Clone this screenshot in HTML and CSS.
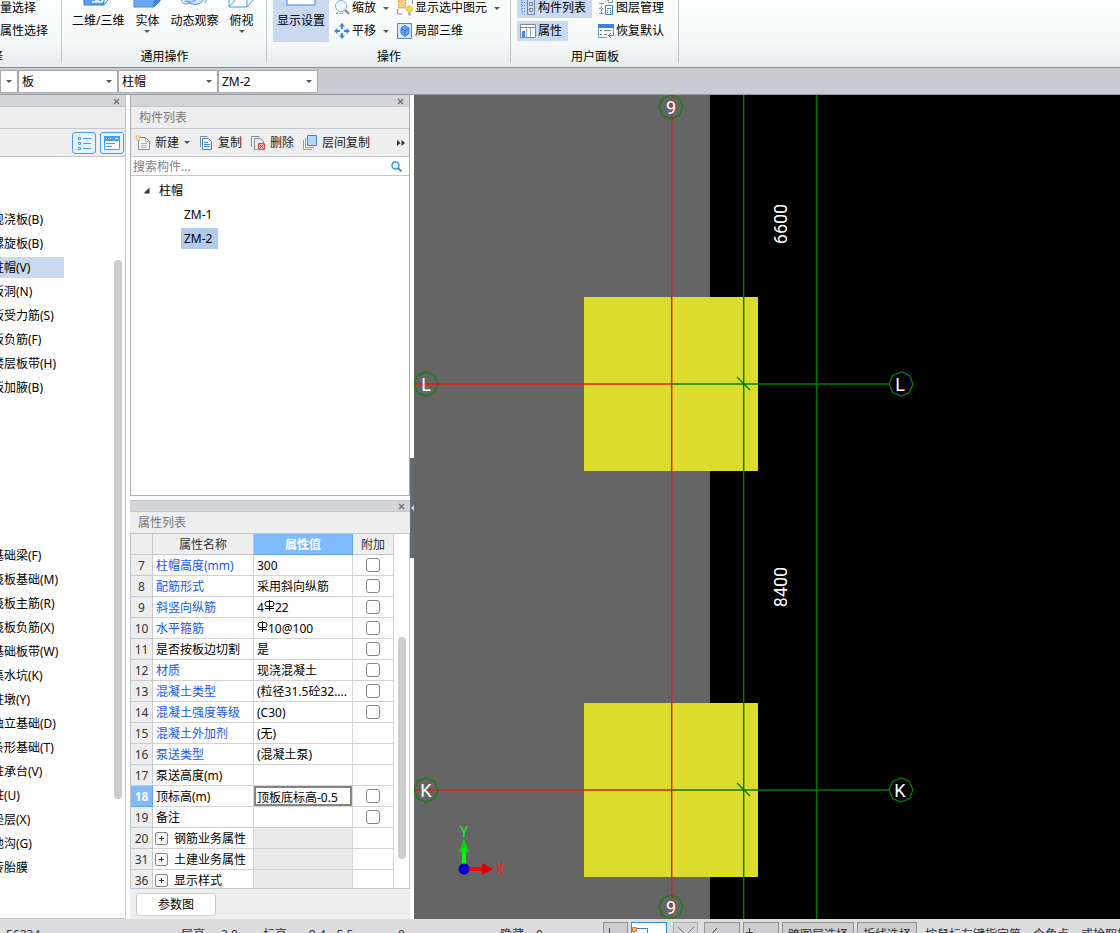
FILE: index.html
```html
<!DOCTYPE html>
<html lang="zh-CN">
<head>
<meta charset="utf-8">
<title>构件建模</title>
<link rel="stylesheet" href="styles.css">
</head>
<body>
<div class="app">
  <header class="ribbon">
    <section class="group group-select">
      <div class="group-body">
        <div class="stack">
          <button class="small-btn">批量选择</button>
          <button class="small-btn">按属性选择</button>
        </div>
      </div>
      <div class="group-label">选择</div>
    </section>
    <section class="group group-view">
      <div class="group-body">
        <button class="big-btn">
          <svg class="big-icon" viewBox="0 0 32 32"><path d="M2 8h20v18H2z" fill="#5b9df0" stroke="#2f7bd8"/><path d="M22 26l6-8V4" fill="none" stroke="#4a92ea"/><path d="M22 26l6-8-6 1z" fill="#e9f2fd" stroke="#4a92ea"/><path d="M10 19h4v4h-4m4 0M16 18v5h2q3 0 3-3v-2" fill="none" stroke="#fff" stroke-width="1.5"/></svg>
          <span>二维/三维</span><i class="spacer"></i>
        </button>
        <button class="big-btn">
          <svg class="big-icon" viewBox="0 0 32 32"><path d="M3 8h20v20H3z" fill="#6da9f2" stroke="#3f87df"/><path d="M23 28l6-6V4l-6 5z" fill="#4385de" stroke="#3f87df"/></svg>
          <span>实体</span><i class="caret"></i>
        </button>
        <button class="big-btn">
          <svg class="big-icon" viewBox="0 0 32 32"><path d="M5 18q-4 6 3 7 3 0 5-2M26 15q4 5 1 9" fill="none" stroke="#4a92ea"/><circle cx="17" cy="15" r="10.500" fill="#cfe4fc" stroke="#4a92ea"/><path d="M6 22q8 3 14-3" fill="none" stroke="#4a92ea"/></svg>
          <span>动态观察</span><i class="spacer"></i>
        </button>
        <button class="big-btn">
          <svg class="big-icon" viewBox="0 0 32 32"><path d="M3 8h18v20H3zM21 28l8-9V2M3 28l8-9h18M11 19V2M21 14l8-6" fill="none" stroke="#4a92ea"/></svg>
          <span>俯视</span><i class="caret"></i>
        </button>
      </div>
      <div class="group-label">通用操作</div>
    </section>
    <section class="group group-ops">
      <div class="group-body">
        <button class="big-btn is-on">
          <svg class="big-icon" viewBox="0 0 32 32"><path d="M2 4h28v22H2z" fill="#fff" stroke="#3d8be6"/></svg>
          <span>显示设置</span><i class="spacer"></i>
        </button>
        <div class="stack">
          <button class="small-btn">
            <svg class="icon" viewBox="0 0 16 16"><circle cx="7" cy="6" r="5.500" fill="#f3f8fe" stroke="#7fb0e8"/><path d="M11 10l4 4" stroke="#8b949e" stroke-width="2.400"/><path d="M2 13.500h7M3.500 12v3" stroke="#e07a32" stroke-dasharray="2 1"/></svg>
            <span>缩放</span><i class="caret"></i>
          </button>
          <button class="small-btn">
            <svg class="icon" viewBox="0 0 16 16"><path d="M8 0l3 3.500H5zM8 16l3-3.500H5zM0 8l3.500-3v6zM16 8l-3.500-3v6z" fill="#3d84d8"/><path d="M8 3v3M8 10v3M3 8h3M10 8h3" stroke="#3d84d8" stroke-width="2"/></svg>
            <span>平移</span><i class="caret"></i>
          </button>
        </div>
        <div class="stack">
          <button class="small-btn">
            <svg class="icon" viewBox="0 0 16 16"><path d="M1.500 0h7v8h-7z" fill="#ffd08a" stroke="#e8952f" stroke-dasharray="2 1"/><path d="M.500 9v5h5M15.500 0v4" fill="none" stroke="#8b949e"/><circle cx="12.500" cy="9" r="3" fill="#ffd650" stroke="#e6b93a"/><path d="M11.500 12.500h2v3h-2z" fill="#8b949e"/></svg>
            <span>显示选中图元</span><i class="caret"></i>
          </button>
          <button class="small-btn">
            <svg class="icon" viewBox="0 0 16 16"><path d="M.500.500h14v15h-14z" fill="#d7e8fd" stroke="#5c88bd"/><path d="M8 2.500l4 2.500v5l-4 3.500L4 10V5z" fill="#5fa5f5" stroke="#3477cb"/><path d="M5 6l3 2 3-2M8 8v4" fill="none" stroke="#3477cb"/></svg>
            <span>局部三维</span>
          </button>
        </div>
      </div>
      <div class="group-label">操作</div>
    </section>
    <section class="group group-panels">
      <div class="group-body">
        <div class="stack">
          <button class="small-btn is-on">
            <svg class="icon" viewBox="0 0 16 16"><path d="M1.500 0v14M2 2.500h4M2 5.500h4M2 8.500h4M2 11.500h4M2 14.500h4" fill="none" stroke="#5c93d8" stroke-dasharray="1 1"/><path d="M7.500 0v14.500h7V0M9.500 2.500h3v3h-3zM9.500 8.500h3v3h-3z" fill="none" stroke="#72869e"/></svg>
            <span>构件列表</span>
          </button>
          <button class="small-btn is-on">
            <svg class="icon" viewBox="0 0 16 16"><path d="M.500 1.500h15v13H.500z" fill="#fff" stroke="#7d8a99"/><path d="M1 4.500h14" stroke="#7d8a99"/><path d="M6.500 5v9M10.500 5v9" stroke="#a0abb7"/><path d="M2 8h3v6H2z" fill="#3d84d8"/></svg>
            <span>属性</span>
          </button>
        </div>
        <div class="stack">
          <button class="small-btn">
            <svg class="icon" viewBox="0 0 16 16"><path d="M1 3.500h5M3.500 3v11M1 8.500h4M1 13.500h5M7 2l3-2" fill="none" stroke="#8b98a7" stroke-dasharray="2 1"/><path d="M7.500 5.500h7v9h-7z" fill="#fff" stroke="#3d84d8"/><path d="M9 8.500h4M9 10.500h1M12 10.500h1M9 12.500h1M12 12.500h1" stroke="#3d84d8"/><path d="M10.500 0v2.500h4V0" fill="none" stroke="#8b98a7"/></svg>
            <span>图层管理</span>
          </button>
          <button class="small-btn">
            <svg class="icon" viewBox="0 0 16 16"><path d="M9 14.500H.500V2h15v8" fill="none" stroke="#6e9fd8"/><path d="M0 1h16v4H0z" fill="#3d84d8"/><path d="M2 7.500h2M6 7.500h7M2 11.500h2M6 11.500h3" stroke="#6f7c8b"/><path d="M10 12.500h5.500V9M13 10l-2.500 2.500L13 15" fill="none" stroke="#3d84d8"/></svg>
            <span>恢复默认</span>
          </button>
        </div>
      </div>
      <div class="group-label">用户面板</div>
    </section>
  </header>

  <nav class="combo-bar" aria-label="构件切换">
    <label class="combo combo-cut"><select aria-label="楼层"><option></option></select></label>
    <label class="combo"><select aria-label="构件类别"><option>板</option></select></label>
    <label class="combo"><select aria-label="构件类型"><option>柱帽</option></select></label>
    <label class="combo"><select aria-label="构件"><option>ZM-2</option></select></label>
  </nav>

  <main class="workspace">
    <aside class="nav-panel">
      <div class="dock-bar"><button class="close" aria-label="关闭"><svg viewBox="0 0 7 7"><path d="M1 1l5 5M6 1L1 6"/></svg></button></div>
      <div class="panel-title"></div>
      <div class="nav-tools">
        <button class="view-btn" aria-label="列表视图"><svg viewBox="0 0 14 14"><path d="M1.500 1.500h2v2h-2zM1.500 6.500h2v2h-2zM1.500 11.500h2v2h-2zM6 2.500h8M6 7.500h8M6 12.500h8" fill="none" stroke="#4a9cf0"/></svg></button>
        <button class="view-btn" aria-label="面板视图"><svg viewBox="0 0 16 14"><path d="M.500.500h15v13H.500z" fill="#fff" stroke="#4a9cf0"/><path d="M0 0h16v5H0z" fill="#4a9cf0"/><path d="M2 2.500h1M4 2.500h1M6 2.500h1M11 2.500h3" stroke="#fff"/><path d="M2 7.500h9M2 10.500h6" stroke="#4a9cf0"/></svg></button>
      </div>
      <div class="nav-scroll">
        <div class="nav-lists">
          <ul class="nav-list">
            <li><span>现浇板(B)</span></li>
            <li><span>螺旋板(B)</span></li>
            <li class="is-on"><span>柱帽(V)</span></li>
            <li><span>板洞(N)</span></li>
            <li><span>板受力筋(S)</span></li>
            <li><span>板负筋(F)</span></li>
            <li><span>楼层板带(H)</span></li>
            <li><span>板加腋(B)</span></li>
          </ul>
          <ul class="nav-list">
            <li><span>基础梁(F)</span></li>
            <li><span>筏板基础(M)</span></li>
            <li><span>筏板主筋(R)</span></li>
            <li><span>筏板负筋(X)</span></li>
            <li><span>基础板带(W)</span></li>
            <li><span>集水坑(K)</span></li>
            <li><span>柱墩(Y)</span></li>
            <li><span>独立基础(D)</span></li>
            <li><span>条形基础(T)</span></li>
            <li><span>桩承台(V)</span></li>
            <li><span>桩(U)</span></li>
            <li><span>垫层(X)</span></li>
            <li><span>地沟(G)</span></li>
            <li><span>砖胎膜</span></li>
          </ul>
        </div>
        <div class="track nav-track"><div class="thumb"></div></div>
      </div>
    </aside>

    <div class="docks">
      <section class="list-panel">
        <div class="dock-bar"><button class="close" aria-label="关闭"><svg viewBox="0 0 7 7"><path d="M1 1l5 5M6 1L1 6"/></svg></button></div>
        <h2 class="panel-title">构件列表</h2>
        <div class="list-tools">
          <button class="tool-btn"><svg class="icon" viewBox="0 0 16 16"><path d="M3.500 2.500h7l4 4v8h-11z" fill="#fff" stroke="#7d8a99"/><path d="M10.500 2.500v4h4M6 8.500h6M6 10.500h6M6 12.500h6" fill="none" stroke="#a9b2bc"/><path d="M1 1h4v4H1z" fill="#ffe0a8" stroke="#f0983a" stroke-dasharray="1 1"/></svg><span>新建</span><i class="caret"></i></button>
          <button class="tool-btn"><svg class="icon" viewBox="0 0 16 16"><path d="M2.500 12V1.500h7" fill="none" stroke="#7d8a99"/><path d="M4.500 3.500h6l3 3v8h-9z" fill="#fff" stroke="#3d84d8"/><path d="M6 7.500h4M6 9.500h6M6 11.500h6" stroke="#3d84d8"/></svg><span>复制</span></button>
          <button class="tool-btn"><svg class="icon" viewBox="0 0 16 16"><path d="M1.500 12V1.500h8M4.500 14.500v-11h6l3 3v3M4.500 14.500h3" fill="none" stroke="#7d8a99"/><path d="M8.500 8.500h6v6h-6z" fill="#f6b9b9" stroke="#d94343"/><path d="M9.500 9.500l4 4M13.500 9.500l-4 4" stroke="#c92f2f"/></svg><span>删除</span></button>
          <button class="tool-btn"><svg class="icon" viewBox="0 0 16 16"><path d="M1.500 5v9.500H10M3.500 3v9.500H12" fill="none" stroke="#e98a45"/><path d="M5.500.500h9v10h-9z" fill="#b5d6fb" stroke="#3d84d8"/></svg><span>层间复制</span></button>
          <button class="more" aria-label="更多"><svg viewBox="0 0 8 6"><path d="M0 0l3.500 3L0 6zM4.500 0L8 3 4.500 6z" fill="#333"/></svg></button>
        </div>
        <div class="search">
          <input type="text" placeholder="搜索构件..." aria-label="搜索构件">
          <svg viewBox="0 0 11 11"><circle cx="4.500" cy="4.500" r="3.500" fill="#eef7fd" stroke="#3a97cf" stroke-width="1.500"/><path d="M7 7l3.500 3.500" stroke="#3a97cf" stroke-width="2"/></svg>
        </div>
        <ul class="tree">
          <li class="tree-root"><svg viewBox="0 0 7 7"><path d="M6.500.500v6H.500z" fill="#333"/></svg><span>柱帽</span></li>
          <li class="tree-leaf"><span>ZM-1</span></li>
          <li class="tree-leaf is-on"><span>ZM-2</span></li>
        </ul>
      </section>

      <section class="props-panel">
        <div class="dock-bar"><button class="close" aria-label="关闭"><svg viewBox="0 0 7 7"><path d="M1 1l5 5M6 1L1 6"/></svg></button></div>
        <h2 class="panel-title">属性列表</h2>
        <div class="props-scroll">
          <div class="table-box">
          <table class="props">
            <colgroup><col class="c-num"><col class="c-name"><col class="c-val"><col class="c-add"></colgroup>
            <thead><tr><th></th><th>属性名称</th><th class="is-on">属性值</th><th>附加</th></tr></thead>
            <tbody>
              <tr><th>7</th><td class="link">柱帽高度(mm)</td><td>300</td><td><input type="checkbox" aria-label="附加 柱帽高度"></td></tr>
              <tr><th>8</th><td class="link">配筋形式</td><td>采用斜向纵筋</td><td><input type="checkbox" aria-label="附加 配筋形式"></td></tr>
              <tr><th>9</th><td class="link">斜竖向纵筋</td><td>4<svg class="rebar" viewBox="0 0 11 12"><path d="M5.500 0v11M3 1.500h5q2 0 2 2.500t-2 2.500H3Q1 6.500 1 4t2-2.500zM1 8.500h9" fill="none" stroke="#000"/></svg>22</td><td><input type="checkbox" aria-label="附加 斜竖向纵筋"></td></tr>
              <tr><th>10</th><td class="link">水平箍筋</td><td><svg class="rebar" viewBox="0 0 11 12"><path d="M5.500 0v11M3 1.500h5q2 0 2 2.500t-2 2.500H3Q1 6.500 1 4t2-2.500zM1 8.500h9" fill="none" stroke="#000"/></svg>10@100</td><td><input type="checkbox" aria-label="附加 水平箍筋"></td></tr>
              <tr><th>11</th><td>是否按板边切割</td><td>是</td><td><input type="checkbox" aria-label="附加 是否按板边切割"></td></tr>
              <tr><th>12</th><td class="link">材质</td><td>现浇混凝土</td><td><input type="checkbox" aria-label="附加 材质"></td></tr>
              <tr><th>13</th><td class="link">混凝土类型</td><td>(粒径31.5砼32....</td><td><input type="checkbox" aria-label="附加 混凝土类型"></td></tr>
              <tr><th>14</th><td class="link">混凝土强度等级</td><td>(C30)</td><td><input type="checkbox" aria-label="附加 混凝土强度等级"></td></tr>
              <tr><th>15</th><td class="link">混凝土外加剂</td><td>(无)</td><td></td></tr>
              <tr><th>16</th><td class="link">泵送类型</td><td>(混凝土泵)</td><td></td></tr>
              <tr><th>17</th><td>泵送高度(m)</td><td></td><td></td></tr>
              <tr class="is-current"><th>18</th><td>顶标高(m)</td><td class="editing"><input type="text" value="顶板底标高-0.5" aria-label="顶标高"></td><td><input type="checkbox" aria-label="附加 顶标高"></td></tr>
              <tr><th>19</th><td>备注</td><td></td><td><input type="checkbox" aria-label="附加 备注"></td></tr>
              <tr class="fold"><th>20</th><td><button class="plus" aria-label="展开 钢筋业务属性"></button>钢筋业务属性</td><td></td><td></td></tr>
              <tr class="fold"><th>31</th><td><button class="plus" aria-label="展开 土建业务属性"></button>土建业务属性</td><td></td><td></td></tr>
              <tr class="fold"><th>36</th><td><button class="plus" aria-label="展开 显示样式"></button>显示样式</td><td></td><td></td></tr>
            </tbody>
          </table>
          </div>
          <div class="track props-track"><div class="thumb"></div></div>
        </div>
        <div class="props-foot"><button class="param-btn">参数图</button></div>
      </section>
    </div>

    <div class="splitter"><button class="grip" aria-label="收起面板"></button></div>

    <section class="viewport">
      <svg class="scene" role="img" aria-label="平面视图">
        <rect width="100%" height="100%" fill="#000"/>
        <rect width="296" height="100%" fill="#656565"/>
        <rect x="170" y="202" width="174" height="174" fill="#dcdc2d"/>
        <rect x="170" y="608" width="174" height="174" fill="#dcdc2d"/>
        <g class="axis-green">
          <line x1="329.700" y1="0" x2="329.700" y2="100%"/>
          <line x1="402.500" y1="0" x2="402.500" y2="100%"/>
          <line x1="257" y1="289" x2="475" y2="289"/>
          <line x1="257" y1="695" x2="475" y2="695"/>
          <path d="M323 282l13 13M323 688l13 13"/>
        </g>
        <g class="axis-red">
          <line x1="257.700" y1="0" x2="257.700" y2="100%"/>
          <line x1="1" y1="289" x2="257" y2="289"/>
          <line x1="1" y1="695" x2="257" y2="695"/>
        </g>
        <g class="bubbles">
          <path d="M245 12l3.500-8.500L257 0l8.500 3.500L269 12l-3.500 8.500L257 24l-8.500-3.500z"/>
          <path d="M245 812l3.500-8.500L257 800l8.500 3.500L269 812l-3.500 8.500L257 824l-8.500-3.500z"/>
          <path d="M0 289l3.500-8.500L12 277l8.500 3.500L24 289l-3.500 8.500L12 301l-8.500-3.500z"/>
          <path d="M475 289l3.500-8.500L487 277l8.500 3.500L499 289l-3.500 8.500L487 301l-8.500-3.500z"/>
          <path d="M0 695l3.500-8.500L12 683l8.500 3.500L24 695l-3.500 8.500L12 707l-8.500-3.500z"/>
          <path d="M475 695l3.500-8.500L487 683l8.500 3.500L499 695l-3.500 8.500L487 707l-8.500-3.500z"/>
        </g>
        <g class="cad-text">
          <text x="257" y="19">9</text>
          <text x="257" y="819">9</text>
          <text x="12" y="296">L</text>
          <text x="486" y="296">L</text>
          <text x="12" y="702">K</text>
          <text x="486" y="702">K</text>
          <text transform="translate(373 129) rotate(-90)">6600</text>
          <text transform="translate(373 492) rotate(-90)">8400</text>
        </g>
        <path d="M48 756h4v14h-4z" fill="#0f0"/><path d="M50 744l5 13H45z" fill="#00dc00"/>
        <path d="M54 772h14v4H54z" fill="#f00"/><path d="M79 774l-11-6v12z" fill="#dc0000"/>
        <circle cx="50" cy="774" r="5.500" fill="#0000c8"/>
        <g class="gizmo-text"><text x="50" y="742" fill="#2de82d">Y</text><text x="86" y="779" fill="#ff2020">X</text></g>
      </svg>
    </section>
  </main>

  <footer class="status">
    <div class="readouts">
      <span>56234</span>
      <span>层高</span><span>2.8</span>
      <span>标高</span><span>-8.4~-5.5</span>
      <span>0</span>
      <span>隐藏</span><span>0</span>
    </div>
    <div class="modes">
      <button class="mode" aria-label="正交"><svg viewBox="0 0 24 24"><path d="M5.500 5v13H18"/></svg></button>
      <button class="mode wide is-on" aria-label="捕捉"><svg viewBox="0 0 24 24"><path d="M1.500 5.500h14v12h-14z" stroke="#3d84d8"/><path d="M.500 4.500h4v4h-4z" fill="#f6b27a" stroke="#e07a32"/></svg></button>
      <button class="mode is-off" aria-label="交点"><svg viewBox="0 0 24 24"><path d="M4 4l16 16M20 4L4 20"/></svg></button>
      <button class="mode wide" aria-label="垂点"><svg viewBox="0 0 24 24"><path d="M12 5L4 14M8 13h6"/></svg></button>
      <button class="mode wide" aria-label="中点"><svg viewBox="0 0 24 24"><path d="M5.500 5v12M2 9.500h7"/></svg></button>
      <button class="mode text">跨图层选择</button>
      <button class="mode text">折线选择</button>
    </div>
    <span class="hint">按鼠标左键指定第一个角点，或拾取构件图元</span>
  </footer>
</div>
</body>
</html>
```
FILE: styles.css
```css
* { box-sizing: border-box; }
body {
  margin: 0;
  font: 12px/16px "Noto Sans", "Noto Sans CJK SC", sans-serif;
  color: #000;
}
button, input, select { font: inherit; color: inherit; margin: 0; }
button { background: none; border: 0; padding: 0; }
ul { list-style: none; margin: 0; padding: 0; }
h2 { margin: 0; font-size: 12px; font-weight: 400; }
svg { display: block; flex: none; }

.app { height: 100vh; display: flex; flex-direction: column; overflow: hidden; }

/* Ribbon */
.ribbon {
  flex: none;
  display: flex;
  height: 68px;
  overflow: hidden;
  background: linear-gradient(#fdfefe, #f6f9f9 60%, #e6eeed);
  border-bottom: 1px solid #8d9093;
}
.group {
  flex: none;
  display: flex;
  flex-direction: column;
  justify-content: flex-end;
  position: relative;
}
.group::after {
  content: "";
  position: absolute;
  right: 0;
  bottom: 4px;
  height: 64px;
  border-right: 1px solid #c3c6c9;
}
.group-select { width: 142px; margin-left: -80px; }
.group-view { width: 205px; }
.group-ops { width: 244px; }
.group-panels { width: 168px; }
.group-body { display: flex; align-items: flex-end; padding: 0 6px; }
.group-select .group-body { padding: 0 0 0 65px; }
.group-view .group-body { gap: 11px; padding-left: 10px; }
.group-ops .group-body { gap: 2px; }
.group-panels .group-body { gap: 3px; }
.group-label { text-align: center; line-height: 18px; padding: 6px 0 1px; }
.big-btn {
  display: flex;
  flex-direction: column;
  align-items: center;
  white-space: nowrap;
}
.group-ops .big-btn { padding: 0 4px; }
.big-icon { width: 32px; height: 32px; margin: 0 -4px 2px; }
.big-btn .caret { margin: 1px 0 9px; }
.spacer { height: 13px; }
.is-on.big-btn, .is-on.small-btn { background: #c9d9f0; }
.caret {
  flex: none;
  border: 3px solid transparent;
  border-top-color: #555;
  border-bottom: 0;
}
.stack { display: flex; flex-direction: column; align-items: flex-start; gap: 3px; padding-bottom: 1px; }
.small-btn { display: flex; align-items: center; gap: 2px; height: 20px; padding: 0 3px; white-space: nowrap; }
.small-btn.is-on { padding-right: 6px; }
.small-btn .caret { margin-left: 5px; }
.icon { width: 16px; height: 16px; }

/* Component selectors */
.combo-bar {
  flex: none;
  display: flex;
  height: 27px;
  padding: 2px 0;
  background: #c9cbd0;
  border-bottom: 1px solid #95989c;
}
.combo { position: relative; width: 100px; display: flex; }
.combo-cut { width: 18px; }
.combo select {
  appearance: none;
  width: 100%;
  height: 23px;
  padding: 0 3px;
  border: 1px solid #a6a8ab;
  border-radius: 0;
  background: #fff;
}
.combo::after {
  content: "";
  position: absolute;
  right: 6px;
  top: 10px;
  border: 3px solid transparent;
  border-top-color: #555;
  border-bottom: 0;
  pointer-events: none;
}

.workspace { flex: 1; display: flex; min-height: 0; background: #fff; }

/* Docked panels */
.dock-bar {
  flex: none;
  display: flex;
  justify-content: flex-end;
  align-items: center;
  height: 12px;
  padding: 1px 5px 0 0;
  background: #d4d5da;
  border-bottom: 1px solid #c4c6cd;
}
.close svg { width: 7px; height: 7px; stroke: #777; stroke-width: 1.5; fill: none; }
.panel-title {
  flex: none;
  height: 22px;
  padding: 0 8px;
  line-height: 21px;
  color: #777;
  background: #eee;
  border-bottom: 1px solid #c4c6cd;
}
.nav-panel {
  flex: none;
  display: flex;
  flex-direction: column;
  width: 126px;
  border-right: 1px solid #c4c6cd;
  border-bottom: 1px solid #c4c6cd;
}
.nav-tools {
  flex: none;
  display: flex;
  justify-content: flex-end;
  align-items: center;
  gap: 4px;
  height: 28px;
  padding-right: 1px;
  background: #eee;
  border-bottom: 1px solid #c4c6cd;
}
.view-btn {
  display: grid;
  place-items: center;
  width: 24px;
  height: 22px;
  border: 1px solid #4a9cf0;
  border-radius: 3px;
  background: #e9f3fe;
}
.view-btn svg { width: 16px; height: 14px; }
.nav-scroll { flex: 1; display: flex; min-height: 0; overflow: hidden; }
.nav-lists { flex: 1; display: flex; flex-direction: column; gap: 144px; padding-top: 50px; overflow: hidden; }
.nav-list li { display: flex; height: 24px; align-items: center; }
.nav-list span { margin-left: -11px; padding: 0 3px; line-height: 21px; white-space: nowrap; }
.nav-list .is-on span { flex: none; width: 75px; background: #c9d9f0; }
.track { flex: none; display: grid; }
.nav-track { width: 11px; padding-right: 3px; grid-template-rows: 103fr 539fr 119fr; }
.props-track { width: 15px; padding: 0 3px 0 4px; grid-template-rows: 103fr 222fr 29fr; }
.thumb { grid-row: 2; border-radius: 4px; background: #cdcdcd; }

.docks { flex: none; display: flex; flex-direction: column; gap: 4px; width: 284px; padding-left: 4px; }
.list-panel {
  flex: 401 1 0;
  display: flex;
  flex-direction: column;
  min-height: 0;
  border: 1px solid #abadb1;
  border-top: 0;
}
.list-tools {
  flex: none;
  display: flex;
  align-items: center;
  height: 28px;
  padding: 0 4px;
  gap: 8px;
  background: #eee;
  border-bottom: 1px solid #c4c6cd;
  color: #222;
}
.tool-btn { display: flex; align-items: center; gap: 4px; white-space: nowrap; }
.tool-btn .caret { margin-left: 1px; }
.more { margin-left: auto; }
.more svg { width: 8px; height: 6px; }
.search { flex: none; display: flex; align-items: center; height: 19px; padding-right: 7px; border-bottom: 1px solid #c4c6cd; }
.search input { flex: 1; min-width: 0; height: 18px; border: 0; padding: 0 2px; outline: 0; }
.search input::placeholder { color: #808080; opacity: 1; }
.search svg { width: 11px; height: 11px; }
.tree { padding-top: 3px; }
.tree li { display: flex; align-items: center; height: 24px; }
.tree .tree-root { gap: 9px; height: 23px; padding-left: 12px; }
.tree-root svg { width: 7px; height: 7px; }
.tree-leaf { padding-left: 50px; }
.tree-leaf span { padding: 0 6px 0 3px; line-height: 21px; }
.tree-leaf.is-on span { background: #b3cbeb; }

.props-panel {
  flex: 419 1 0;
  display: flex;
  flex-direction: column;
  min-height: 0;
  border-top: 1px solid #c4c6cd;
  background: #eee;
}
.props-panel .dock-bar { height: 11px; }
.props-scroll {
  flex: 1;
  display: flex;
  min-height: 0;
  overflow: hidden;
  background: #fff;
  border: 1px solid #c4c6cd;
  border-top: 0;
}
.table-box { flex: 1; overflow: hidden; }
.props { width: 100%; table-layout: fixed; border-collapse: separate; border-spacing: 0; }
.c-num { width: 22px; }
.c-name { width: 101px; }
.c-val { width: 99px; }
.c-add { width: 41px; }
.props th, .props td {
  height: 21px;
  padding: 2px 3px 0;
  line-height: 18px;
  white-space: nowrap;
  overflow: hidden;
  text-align: left;
  font-weight: 400;
  border-right: 1px solid #d3d3d5;
  border-bottom: 1px solid #d3d3d5;
}
.props th { padding: 2px 0 0; text-align: center; color: #333; background: #eee; border-color: #c8c9cc; }
.props thead .is-on, .props .is-current th { background: #80baff; border-color: #62a5ec; color: #fff; font-weight: 700; }
.props .link { color: #1458f0; }
.props td:last-child { padding: 0; text-align: center; line-height: 0; }
.props input[type="checkbox"] {
  appearance: none;
  width: 14px;
  height: 14px;
  vertical-align: middle;
  border: 1px solid #858585;
  border-radius: 3px;
  background: #fff;
}
.props td.editing { padding: 0; }
.editing input { display: block; width: 100%; height: 20px; padding: 1px 1px 0; border: 2px solid #858585; outline: 0; border-radius: 0; }
.rebar { display: inline-block; width: 11px; height: 12px; vertical-align: 0; }
.fold td:nth-child(3) { background: #eaeaea; }
.plus {
  display: inline-block;
  width: 13px;
  height: 13px;
  margin: 0 6px 0 -1px;
  border: 1px solid #858585;
  border-radius: 2px;
  vertical-align: -1px;
  background:
    linear-gradient(#333, #333) center / 5px 1px no-repeat,
    linear-gradient(#333, #333) center / 1px 5px no-repeat;
}
.props-foot { flex: none; padding: 4px 6px 3px; }
.param-btn { display: block; width: 80px; height: 23px; border: 1px solid #ccc; border-radius: 3px; background: #fff; }

.splitter { flex: none; display: flex; align-items: center; width: 4px; background: #fff; }
.splitter .grip {
  position: relative;
  width: 4px;
  height: 100px;
  margin-top: 2px;
  background: #5f6b7a;
}
.grip::after {
  content: "";
  position: absolute;
  top: 47px;
  left: 1px;
  border: 3px solid transparent;
  border-right-color: #d0d4da;
  border-left: 0;
}
.viewport { flex: 1; min-width: 0; background: #000; }
.scene { width: 100%; height: 100%; }
.axis-green { fill: none; stroke: #007c00; stroke-width: 1.4; }
.axis-red { fill: none; stroke: #e81818; stroke-width: 1.4; }
.bubbles { fill: none; stroke: #0a820a; stroke-width: 1.2; }
.cad-text { font: 400 18px Roboto, sans-serif; fill: #fff; text-anchor: middle; }
.gizmo-text { font: 400 14px Roboto, sans-serif; text-anchor: middle; }

/* Status bar */
.status { flex: none; display: flex; height: 14px; overflow: hidden; background: #dddde0; color: #333; white-space: nowrap; }
.readouts {
  display: grid;
  grid-template-columns: 175px 40px 42px 42px 93px 102px 36px 67px;
  padding: 8px 0 0 6px;
}
.modes { display: flex; gap: 3px; padding-top: 3px; }
.mode { width: 25px; height: 26px; flex: none; border: 1px solid #929292; background: #ceced1; }
.mode.wide { width: 36px; }
.mode.text { width: auto; padding: 0 5px; }
.mode.is-on { background: #fff; border-color: #2a8eee; }
.mode.is-off { opacity: 0.6; margin: 0 3px; }
.mode svg { width: 24px; height: 24px; fill: none; stroke: #444; }
.hint { padding: 8px 0 0 8px; }
```
